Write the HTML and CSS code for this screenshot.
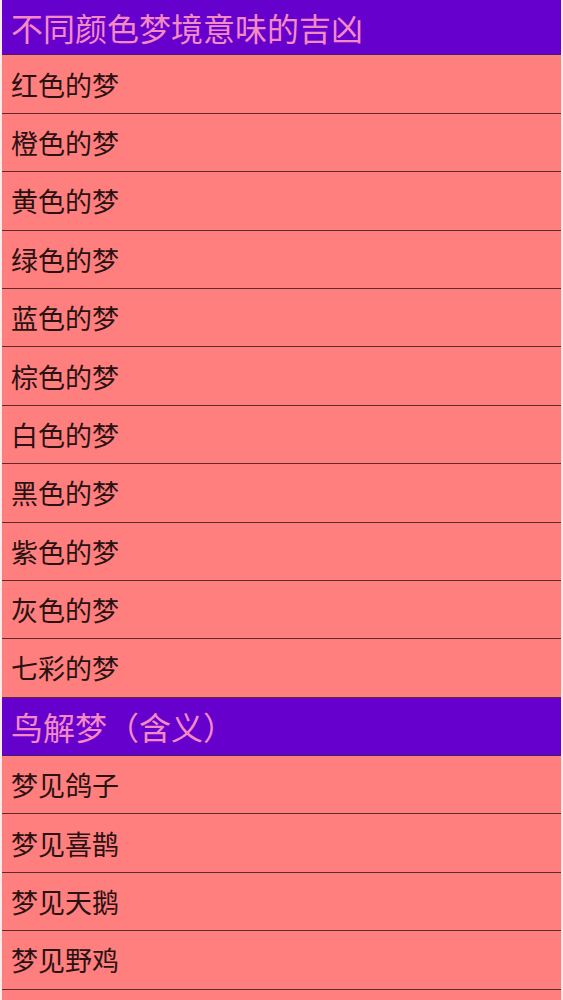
FILE: index.html
```html
<!DOCTYPE html>
<html lang="zh-CN">
<head>
  <meta charset="UTF-8">
  <meta name="viewport" content="width=device-width, initial-scale=1.0">
  <title>梦境解析</title>
  <link rel="stylesheet" href="styles.css">
</head>
<body>
  <div class="list">
    <!-- 颜色 -->
    <div class="section-title first">不同颜色梦境意味的吉凶</div>
    <div class="item">红色的梦</div>
    <div class="item">橙色的梦</div>
    <div class="item">黄色的梦</div>
    <div class="item">绿色的梦</div>
    <div class="item">蓝色的梦</div>
    <div class="item">棕色的梦</div>
    <div class="item">白色的梦</div>
    <div class="item">黑色的梦</div>
    <div class="item">紫色的梦</div>
    <div class="item">灰色的梦</div>
    <div class="item">七彩的梦</div>

    <!-- 鸟 -->
    <div class="section-title">鸟解梦（含义）</div>
    <div class="item">梦见鸽子</div>
    <div class="item">梦见喜鹊</div>
    <div class="item">梦见天鹅</div>
    <div class="item">梦见野鸡</div>
    <div class="item">梦见乌鸦</div>
  </div>
</body>
</html>
```

FILE: styles.css
```css
body {
  margin: 0;
  background-color: #fdeaea;
  font-family: "Noto Sans CJK SC", "Noto Sans", sans-serif;
}

.list {
  margin: 0 2px;
  background-color: #ff7f7f;
}

.section-title {
  box-sizing: border-box;
  height: 58.4px;
  padding-left: 9px;
  display: flex;
  align-items: center;
  background-color: #6600cc;
  color: #f38ac4;
  font-size: 32px;
  border-bottom: 1px solid #4a1a6a;
}

.section-title.first {
  height: 55.4px;
}

.item {
  box-sizing: border-box;
  height: 58.4px;
  padding-left: 9px;
  display: flex;
  align-items: center;
  color: #2a1212;
  font-size: 27px;
  border-bottom: 1px solid #5e2a2a;
}
```
